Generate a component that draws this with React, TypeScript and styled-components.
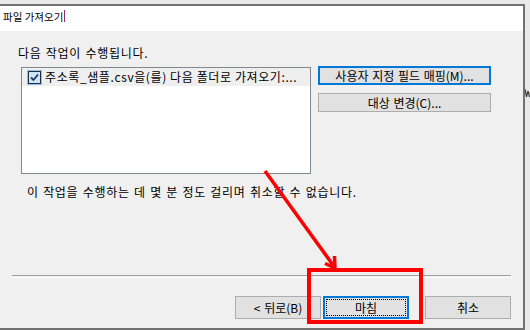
import React from "react";
import styled, { createGlobalStyle } from "styled-components";

const GlobalStyle = createGlobalStyle`
  html, body {
    margin: 0;
    padding: 0;
    background: #e9e9e9;
    width: 530px;
    height: 330px;
    overflow: hidden;
  }
  body {
    font-family: "Noto Sans CJK KR", "Noto Sans", sans-serif;
    font-size: 12px;
    color: #000;
  }
`;

const Page = styled.div`
  position: relative;
  display: flex;
  align-items: flex-start;
  width: 530px;
  height: 330px;
  padding-top: 4px;
  box-sizing: border-box;
`;

const Window = styled.div`
  width: 523px;
  flex: none;
  display: flex;
  flex-direction: column;
  border-top: 2px solid #717171;
  border-right: 2px solid #717171;
  border-bottom: 2px solid #717171;
  background: #f0f0f0;
`;

const TitleBar = styled.div`
  height: 25px;
  background: #ffffff;
  display: flex;
  align-items: flex-start;
  padding-left: 3px;
  box-sizing: border-box;
`;

const TitleText = styled.span`
  font-size: 10.5px;
  line-height: 21px;
  color: #000;
`;

const Caret = styled.span`
  display: inline-block;
  width: 1px;
  height: 12px;
  margin: 4px 0 0 1px;
  background: #9a2a5a;
`;

const Body = styled.div`
  height: 297px;
  display: flex;
  flex-direction: column;
  padding: 14px 12px 9px 0;
  box-sizing: border-box;
  word-spacing: 1px;
`;

const Label = styled.div<{ $indent: number; $top?: number }>`
  margin-left: ${(p) => p.$indent}px;
  margin-top: ${(p) => p.$top ?? 0}px;
  line-height: 16px;
  white-space: nowrap;
  letter-spacing: 0.7px;
`;

const MainRow = styled.div`
  display: flex;
  align-items: flex-start;
  gap: 7px;
  margin: 5px 0 0 21px;
`;

const ListBox = styled.div`
  width: 290px;
  height: 107px;
  margin-top: 1px;
  box-sizing: border-box;
  border: 1px solid #828790;
  background: #ffffff;
`;

const ListItem = styled.div`
  height: 18px;
  display: flex;
  align-items: center;
  gap: 3px;
  padding-left: 5px;
  background: #efefef;
  white-space: nowrap;
  overflow: hidden;
  word-spacing: 0;
`;

const CheckOuter = styled.span`
  width: 15px;
  height: 15px;
  flex: none;
  display: flex;
  align-items: center;
  justify-content: center;
  background: #91c3ec;
`;

const CheckInner = styled.span`
  width: 11px;
  height: 11px;
  display: flex;
  align-items: center;
  justify-content: center;
  border: 1px solid #1d2f45;
  background: #cfe4f7;
`;

const ItemText = styled.span`
  line-height: 18px;
  letter-spacing: 0.6px;
`;

const SideButtons = styled.div`
  display: flex;
  flex-direction: column;
  gap: 8px;
`;

const Button = styled.button<{ $focused?: boolean; $w: number; $h: number }>`
  width: ${(p) => p.$w}px;
  height: ${(p) => p.$h}px;
  box-sizing: border-box;
  margin: 0;
  padding: 0;
  font-family: inherit;
  font-size: 12px;
  color: #000;
  background: #e1e1e1;
  border: ${(p) => (p.$focused ? "2px solid #0078d7" : "1px solid #adadad")};
  display: flex;
  align-items: center;
  justify-content: center;
  white-space: nowrap;
  line-height: 1;
  word-spacing: 1px;
  outline: none;
`;

const FocusRing = styled.span`
  position: absolute;
  inset: 1px;
  border: 1px dotted #000;
`;

const FocusButton = styled(Button)`
  position: relative;
`;

const Spacer = styled.div`
  flex: 1;
`;

const Separator = styled.div`
  margin-left: 12px;
  height: 1px;
  border-top: 1px solid #a0a0a0;
  border-bottom: 1px solid #ffffff;
  margin-bottom: 18px;
`;

const ButtonRow = styled.div`
  display: flex;
  justify-content: flex-end;
  gap: 2px;
`;

const Gap = styled.div`
  width: 12px;
`;

const Side = styled.div`
  width: 5px;
  height: 326px;
  overflow: hidden;
  padding-top: 80px;
  box-sizing: border-box;
`;

const Overlay = styled.svg`
  position: absolute;
  left: 0;
  top: 0;
  pointer-events: none;
`;

export default function App() {
  return (
    <>
      <GlobalStyle />
      <Page>
        <Window>
          <TitleBar>
            <TitleText>파일 가져오기</TitleText>
            <Caret />
          </TitleBar>
          <Body>
            <Label $indent={18}>다음 작업이 수행됩니다.</Label>
            <MainRow>
              <ListBox>
                <ListItem>
                  <CheckOuter>
                    <CheckInner>
                      <svg width="9" height="9" viewBox="0 0 9 9">
                        <path d="M1 4.5 L3.5 7 L8 1.5" fill="none" stroke="#1b3a63" strokeWidth="1.8" />
                      </svg>
                    </CheckInner>
                  </CheckOuter>
                  <ItemText>주소록_샘플.csv을(를) 다음 폴더로 가져오기:...</ItemText>
                </ListItem>
              </ListBox>
              <SideButtons>
                <Button $focused $w={173} $h={19}>사용자 지정 필드 매핑(M)...</Button>
                <Button $w={173} $h={19}>대상 변경(C)...</Button>
              </SideButtons>
            </MainRow>
            <Label $indent={27} $top={10}>이 작업을 수행하는 데 몇 분 정도 걸리며 취소할 수 없습니다.</Label>
            <Spacer />
            <Separator />
            <ButtonRow>
              <Button $w={86} $h={23}>&lt; 뒤로(B)</Button>
              <FocusButton $focused $w={86} $h={23}>
                <FocusRing />
                마침
              </FocusButton>
              <Gap />
              <Button $w={86} $h={23}>취소</Button>
            </ButtonRow>
          </Body>
        </Window>
        <Side>
          <svg width="5" height="10" viewBox="0 0 5 10">
            <path d="M0 1 L1.5 9 L3 3 L4.5 9" fill="none" stroke="#2b3440" strokeWidth="1.1" />
            <line x1="0" y1="5" x2="5" y2="5" stroke="#7a5a2a" strokeWidth="0.8" />
          </svg>
        </Side>
        <Overlay width="530" height="330" viewBox="0 0 530 330">
          <line x1="265" y1="171" x2="333" y2="265" stroke="#ff0000" strokeWidth="3.5" />
          <polyline points="325,263.5 335,268 334.5,256" fill="none" stroke="#ff0000" strokeWidth="3.5" strokeLinejoin="miter" />
          <rect x="309" y="270" width="112" height="52" fill="none" stroke="#ff0000" strokeWidth="4" />
        </Overlay>
      </Page>
    </>
  );
}
